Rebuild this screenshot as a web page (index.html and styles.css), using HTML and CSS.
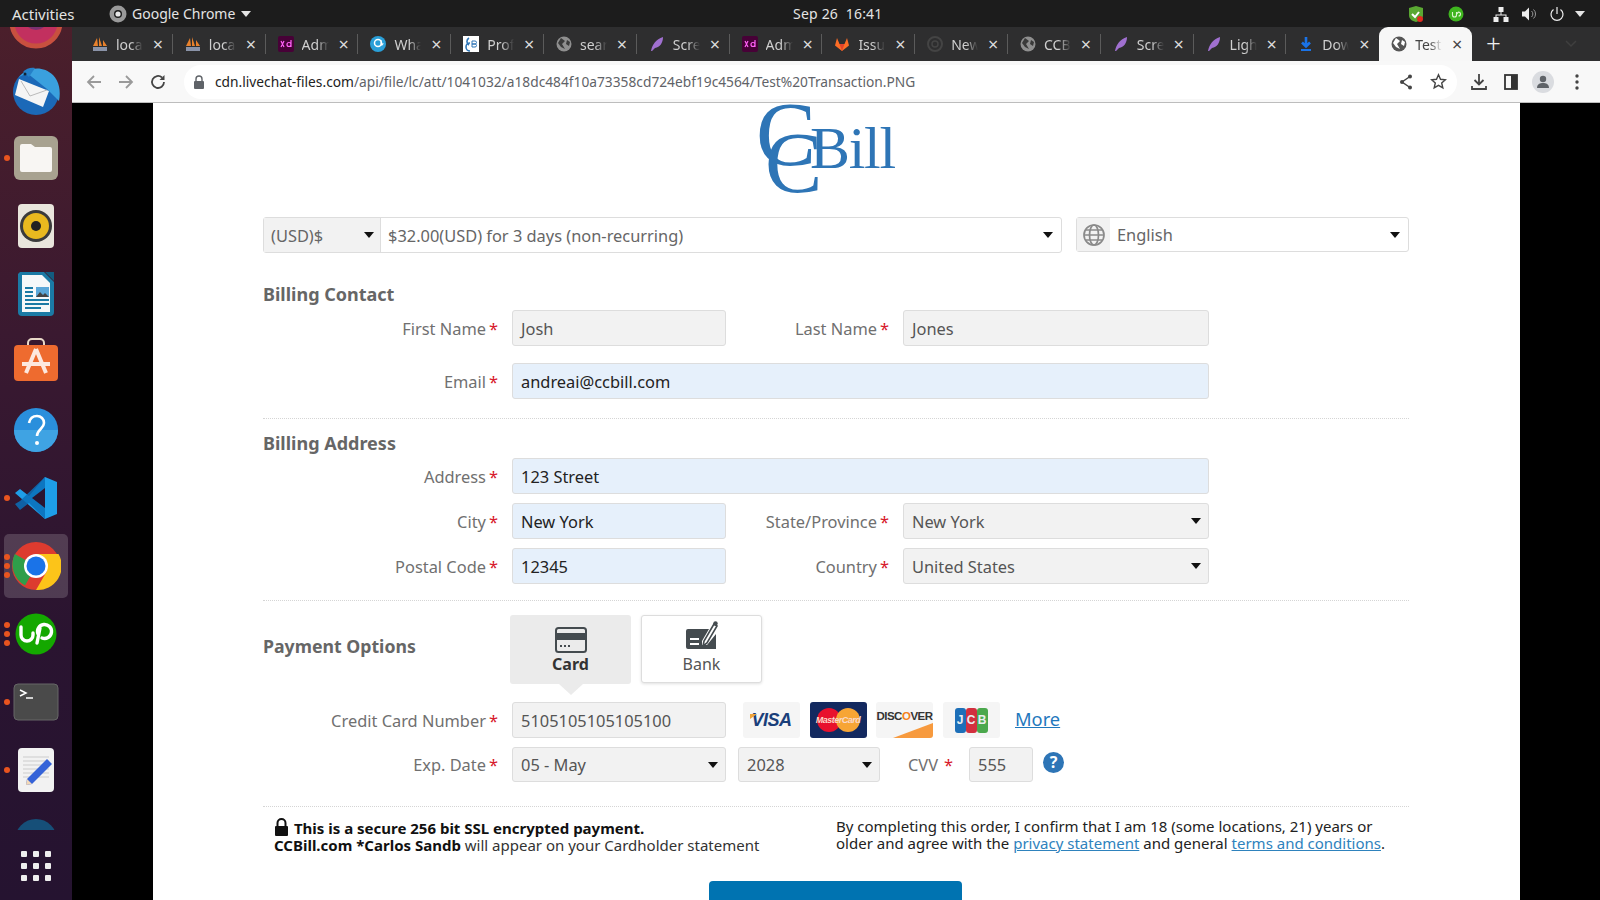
FILE: index.html
```html
<!DOCTYPE html>
<html lang="en">
<head>
<meta charset="utf-8">
<title>Test Transaction</title>
<link rel="stylesheet" href="styles.css">
</head>
<body>
<header class="topbar">
  <span class="activities">Activities</span>
  <span class="appmenu">
    <svg class="ico16" viewBox="0 0 18 18"><circle cx="9" cy="9" r="8.5" fill="#9a9a9a"/><circle cx="9" cy="9" r="4" fill="#1c1c1c"/><circle cx="9" cy="9" r="2.6" fill="#e8e8e8"/></svg>
    Google Chrome <i class="caret-w"></i>
  </span>
  <span class="clock">Sep 26&nbsp; 16:41</span>
  <span class="tray">
    <svg class="tray-a" width="18" height="18" viewBox="0 0 18 18"><path d="M2 3 9 1l7 2v7c0 4-3 6-7 7-4-1-7-3-7-7z" fill="#5aa832"/><path d="m5 9 3 3 4-5" stroke="#fff" stroke-width="2" fill="none"/><circle cx="13" cy="14" r="3" fill="#e02b20"/></svg>
    <svg class="tray-b" width="16" height="16" viewBox="0 0 16 16"><circle cx="8" cy="8" r="7.5" fill="#3fb51f"/><path d="M4.5 6v3a2 2 0 0 0 4 0V6M8.5 8l2-2a1.7 1.7 0 1 1 0 4" stroke="#dff5d0" stroke-width="1.1" fill="none"/></svg>
    <svg class="tray-c" width="16" height="16" viewBox="0 0 16 16" fill="#eee"><rect x="5.5" y="1" width="5" height="5"/><rect x="0.5" y="11" width="5" height="5"/><rect x="10.5" y="11" width="5" height="5"/><path d="M7.5 6h1v2.5H13.5V11h-1V9.5h-9V11h-1V8.5h5z"/></svg>
    <svg class="tray-d" width="16" height="16" viewBox="0 0 16 16"><path d="M1 5.500h3l4-4v13l-4-4H1z" fill="#eee"/><path d="M10.500 5a4 4 0 0 1 0 6M12.500 3.500a6 6 0 0 1 0 9" stroke="#999" fill="none"/></svg>
    <svg class="tray-e" width="16" height="16" viewBox="0 0 16 16" fill="none" stroke="#eee" stroke-width="1.200"><path d="M8 1v7"/><path d="M4.500 3.500a6 6 0 1 0 7 0"/></svg>
    <i class="caret-w"></i>
  </span>
</header>

<div class="desktop">
  <aside class="dock">
    <div class="dock-apps">
      <div class="slot first"><svg width="64" height="64" viewBox="0 0 64 64"><circle cx="32" cy="32" r="24" fill="#c2305f"/><circle cx="32" cy="32" r="24" fill="none" stroke="#c8503f" stroke-width="5"/><circle cx="32" cy="28" r="12" fill="#7a3170"/></svg></div>
      <div class="slot"><svg width="50" height="50" viewBox="0 0 50 50"><circle cx="25" cy="27" r="23" fill="#1b69b8"/><path d="M8 12C16 2 32 0 42 10c6 6 8 16 6 26L36 24 16 8z" fill="#3aa0de"/><path d="M8 14 38 26 32 42 4 30z" fill="#f5f5f5"/><path d="m10 16 9 15 17-6" stroke="#bbb" fill="none"/><path d="M12 7c3-4 9-5 12-4L18 12z" fill="#2580c8"/><circle cx="14" cy="9" r="1.500" fill="#123"/></svg></div>
      <div class="slot"><i class="run one"></i><svg width="46" height="46" viewBox="0 0 46 46"><rect x="1" y="1" width="44" height="44" rx="6" fill="#a8a290"/><path d="M7 11a2 2 0 0 1 2-2h9l4 3h15a2 2 0 0 1 2 2v21a2 2 0 0 1-2 2H9a2 2 0 0 1-2-2z" fill="#f8f6f3"/></svg></div>
      <div class="slot"><svg width="38" height="46" viewBox="0 0 38 46"><rect x="1" y="1" width="36" height="44" rx="4" fill="#e9e5dc"/><circle cx="19" cy="23" r="16" fill="#3b3b3b"/><circle cx="19" cy="23" r="13" fill="#e9b91f"/><circle cx="19" cy="23" r="5" fill="#222"/></svg></div>
      <div class="slot"><svg width="38" height="46" viewBox="0 0 38 46"><path d="M3 1h24l10 10v30a4 4 0 0 1-4 4H5a4 4 0 0 1-4-4V3z" fill="#1b7aa5"/><path d="M5 4h20l8 8v29H5z" fill="#f6f8f9"/><path d="M28 1l9 0 0 9z" fill="#135c80"/><path d="M8 17h8M8 21h8M8 25h8M8 29h24M8 33h24M8 37h16" stroke="#1b7aa5" stroke-width="2"/><rect x="19" y="16" width="13" height="10" fill="#5ba7d8"/><path d="m19 26 4-5 3 3 2-2 4 4z" fill="#444"/></svg></div>
      <div class="slot"><svg class="shift-up" width="46" height="46" viewBox="0 0 46 46"><path d="M15 9V6a4 4 0 0 1 4-4h8a4 4 0 0 1 4 4v3" stroke="#e8d9c8" stroke-width="2" fill="none"/><rect x="1" y="8" width="44" height="36" rx="4" fill="#ee6b2f"/><path d="M23 12 13 36M23 12l10 24M9 27h28" stroke="#fde8de" stroke-width="4" fill="none"/></svg></div>
      <div class="slot"><svg width="46" height="46" viewBox="0 0 46 46"><circle cx="23" cy="23" r="22" fill="#2a8fdc"/><path d="M23 23h22a22 22 0 0 1-44 0z" fill="#3fa3e3"/><path d="M16 16c1-5 4-7 8-7s7 3 7 7c0 6-7 6-7 13" stroke="#fff" stroke-width="2.600" fill="none"/><circle cx="24" cy="36" r="2" fill="#fff"/></svg></div>
      <div class="slot"><i class="run one"></i><svg width="44" height="44" viewBox="0 0 44 44"><path d="M31 1 43 6v32l-12 5L1 17l5-4 9 7z" fill="#1e9ee8"/><path d="M31 1v42L15 27 6 34 1 28l5-3z" fill="#0a6fb8" opacity=".85"/><path d="M31 12 18 22l13 10z" fill="#2b1430"/></svg></div>
      <div class="slot active"><i class="run three"></i><svg width="50" height="50" viewBox="0 0 50 50"><circle cx="25" cy="25" r="24" fill="#dd3b2f"/><path d="M25 25 14 44.500A24 24 0 0 1 3.800 13z" fill="#2f9e4a"/><path d="M25 13H47.500A24 24 0 0 1 25 49L36 30z" fill="#fcc419"/><circle cx="25" cy="25" r="12" fill="#fff"/><circle cx="25" cy="25" r="9.500" fill="#1a73e8"/></svg></div>
      <div class="slot"><i class="run three"></i><svg width="42" height="42" viewBox="0 0 42 42"><circle cx="21" cy="21" r="20.500" fill="#14a800"/><path d="M6 14v8a6 6 0 0 0 12 0v-2" stroke="#fff" stroke-width="3.400" fill="none" stroke-linecap="round"/><path d="M18 22a7 7 0 1 1 4 4M20 16l-3 15" stroke="#fff" stroke-width="3.400" fill="none" stroke-linecap="round" transform="translate(5 -1)"/></svg></div>
      <div class="slot"><i class="run one"></i><svg width="46" height="38" viewBox="0 0 46 38"><rect x="1" y="1" width="44" height="36" rx="4" fill="#4a4a4a" stroke="#666"/><path d="m7 7 6 3-6 3" stroke="#fff" stroke-width="1.500" fill="none"/><path d="M13 15h7" stroke="#fff" stroke-width="1.500"/></svg></div>
      <div class="slot"><i class="run one"></i><svg width="38" height="46" viewBox="0 0 38 46"><rect x="1" y="1" width="36" height="44" rx="4" fill="#f2f2f2"/><path d="M6 10h26M6 14h26M6 18h26M6 22h26M6 26h26M6 30h26" stroke="#ccc"/><path d="m30 12 5 5-20 20-6 1 1-6z" fill="#3563d8"/><path d="m10 32 5 5-6 1z" fill="#f3d9b8"/></svg></div>
      <div class="slot"><svg width="42" height="46" viewBox="0 0 42 46"><circle cx="21" cy="25" r="21" fill="#164f78"/><circle cx="21" cy="27" r="9" fill="#4a3a44"/></svg></div>
    </div>
    <div class="dock-grid"><i></i><i></i><i></i><i></i><i></i><i></i><i></i><i></i><i></i></div>
  </aside>

  <main class="browser">
    <nav class="tabstrip">
      <div class="tab"><svg class="fav" viewBox="0 0 16 16"><path d="M1 10 5 2l1 8zM7 10V1l3 9zM11 10V4l4 6z" fill="#e8812c"/><rect x="1" y="11" width="14" height="4" fill="#8a93a8"/></svg><span class="tt">localhost</span><span class="tx">×</span></div>
      <div class="tab"><svg class="fav" viewBox="0 0 16 16"><path d="M1 10 5 2l1 8zM7 10V1l3 9zM11 10V4l4 6z" fill="#e8812c"/><rect x="1" y="11" width="14" height="4" fill="#8a93a8"/></svg><span class="tt">localhost</span><span class="tx">×</span></div>
      <div class="tab"><svg class="fav" viewBox="0 0 16 16"><rect width="16" height="16" rx="2" fill="#470137"/><path d="M3 5l3 6M6 5l-3 6M13 4v7M13 8.500a2 2 0 1 0-4 0 2 2 0 0 0 4 0" stroke="#ff61f6" stroke-width="1.200" fill="none"/></svg><span class="tt">Admin</span><span class="tx">×</span></div>
      <div class="tab"><svg class="fav" viewBox="0 0 16 16"><circle cx="8" cy="8" r="8" fill="#2a9fd8"/><circle cx="8" cy="7" r="3.500" fill="none" stroke="#fff" stroke-width="1.500"/><path d="M11 4v5q2 1 2-2" stroke="#fff" fill="none"/></svg><span class="tt">What</span><span class="tx">×</span></div>
      <div class="tab"><svg class="fav" viewBox="0 0 16 16"><rect width="16" height="16" fill="#fff"/><path d="M6 2a4 4 0 0 0 0 7M7 7a4 4 0 0 0 0 8" stroke="#2e75b6" stroke-width="1.600" fill="none"/><path d="M9 5h3a1.500 1.500 0 0 1 0 3H9zM9 8h3a1.500 1.500 0 0 1 0 3H9z" stroke="#2e75b6" fill="none"/></svg><span class="tt">Profile</span><span class="tx">×</span></div>
      <div class="tab"><svg class="fav" viewBox="0 0 16 16"><circle cx="8" cy="8" r="7.500" fill="#8f8f8f"/><path d="M5 2 9 5 6 8l3 5-4-2-3-4zM11 4l3 2-1 4-3-2z" fill="#3a3a3a"/></svg><span class="tt">search</span><span class="tx">×</span></div>
      <div class="tab"><svg class="fav" viewBox="0 0 16 16"><path d="M2 15C3 9 7 3 14 1c0 6-3 10-8 11L3 15z" fill="#a070d0"/></svg><span class="tt">Screen</span><span class="tx">×</span></div>
      <div class="tab"><svg class="fav" viewBox="0 0 16 16"><rect width="16" height="16" rx="2" fill="#470137"/><path d="M3 5l3 6M6 5l-3 6M13 4v7M13 8.500a2 2 0 1 0-4 0 2 2 0 0 0 4 0" stroke="#ff61f6" stroke-width="1.200" fill="none"/></svg><span class="tt">Admin</span><span class="tx">×</span></div>
      <div class="tab"><svg class="fav" viewBox="0 0 16 16"><path d="M8 15 1 9.500 3 2l2.500 6h5L13 2l2 7.500z" fill="#fc6d26"/><path d="M8 15 5.500 8h5z" fill="#e24329"/></svg><span class="tt">Issues</span><span class="tx">×</span></div>
      <div class="tab"><svg class="fav" viewBox="0 0 16 16"><circle cx="8" cy="8" r="7" fill="none" stroke="#444" stroke-width="2"/><circle cx="8" cy="8" r="3" fill="none" stroke="#444" stroke-width="1.500"/></svg><span class="tt">New Tab</span><span class="tx">×</span></div>
      <div class="tab"><svg class="fav" viewBox="0 0 16 16"><circle cx="8" cy="8" r="7.500" fill="#8f8f8f"/><path d="M5 2 9 5 6 8l3 5-4-2-3-4zM11 4l3 2-1 4-3-2z" fill="#3a3a3a"/></svg><span class="tt">CCBill</span><span class="tx">×</span></div>
      <div class="tab"><svg class="fav" viewBox="0 0 16 16"><path d="M2 15C3 9 7 3 14 1c0 6-3 10-8 11L3 15z" fill="#a070d0"/></svg><span class="tt">Screen</span><span class="tx">×</span></div>
      <div class="tab"><svg class="fav" viewBox="0 0 16 16"><path d="M2 15C3 9 7 3 14 1c0 6-3 10-8 11L3 15z" fill="#a070d0"/></svg><span class="tt">Light</span><span class="tx">×</span></div>
      <div class="tab pre"><svg class="fav" viewBox="0 0 16 16"><path d="M8 1v9M4 6.500 8 10.500l4-4" stroke="#1a73e8" stroke-width="2.600" fill="none"/><path d="M3 14h10" stroke="#1a73e8" stroke-width="2"/></svg><span class="tt">Downloads</span><span class="tx">×</span></div>
      <div class="tab current"><svg class="fav" viewBox="0 0 16 16"><circle cx="8" cy="8" r="7.500" fill="#555"/><path d="M5 2 9 5 6 8l3 5-4-2-3-4zM11 4l3 2-1 4-3-2z" fill="#fff"/></svg><span class="tt">Test Transaction</span><span class="tx">×</span></div>
      <span class="newtab">+</span>
      <svg class="tabchev" width="12" height="8" viewBox="0 0 12 8"><path d="m1 1 5 5 5-5" stroke="#3f3f3f" stroke-width="1.500" fill="none"/></svg>
    </nav>

    <div class="toolbar">
      <svg class="tb" viewBox="0 0 18 18"><path d="M16 9H3M9 3 3 9l6 6" stroke="#9a9a9a" stroke-width="1.800" fill="none"/></svg>
      <svg class="tb" viewBox="0 0 18 18"><path d="M2 9h13M9 3l6 6-6 6" stroke="#9a9a9a" stroke-width="1.800" fill="none"/></svg>
      <svg class="tb" viewBox="0 0 18 18"><path d="M15 9a6 6 0 1 1-2-4.500" stroke="#444" stroke-width="1.800" fill="none"/><path d="M15.500 2v5h-5z" fill="#444"/></svg>
      <div class="omnibox">
        <svg class="lock" width="12" height="14" viewBox="0 0 12 14"><path d="M3 6V4a3 3 0 0 1 6 0v2" stroke="#5f6368" stroke-width="1.400" fill="none"/><rect x="1" y="6" width="10" height="8" rx="1" fill="#5f6368"/></svg>
        <span class="url"><b>cdn.livechat-files.com</b>/api/file/lc/att/1041032/a18dc484f10a73358cd724ebf19c4564/Test%20Transaction.PNG</span>
        <svg class="omni-a" width="16" height="16" viewBox="0 0 16 16"><path d="M12 2.500 4 8l8 5.500" stroke="#444" stroke-width="1.500" fill="none"/><circle cx="12" cy="2.500" r="2" fill="#444"/><circle cx="4" cy="8" r="2" fill="#444"/><circle cx="12" cy="13.500" r="2" fill="#444"/></svg>
        <svg class="omni-b" width="17" height="17" viewBox="0 0 17 17"><path d="m8.500 1.800 2 4.500 4.900.5-3.700 3.200 1.100 4.800-4.300-2.500-4.300 2.500 1.100-4.800L1.600 6.800l4.900-.5z" stroke="#444" stroke-width="1.400" fill="none"/></svg>
      </div>
      <svg class="tb2 first-tb" viewBox="0 0 18 18"><path d="M9 1v10M4.500 7 9 11.500 13.500 7" stroke="#444" stroke-width="1.800" fill="none"/><path d="M2 13v3h14v-3" stroke="#444" stroke-width="1.800" fill="none"/></svg>
      <svg class="tb2" viewBox="0 0 18 18"><rect x="3" y="2" width="12" height="14" fill="none" stroke="#333" stroke-width="1.800"/><rect x="9" y="2" width="6" height="14" fill="#333"/></svg>
      <svg class="tb2" viewBox="0 0 22 22"><circle cx="11" cy="11" r="11" fill="#dadce0"/><circle cx="11" cy="8" r="3.200" fill="#5f6368"/><path d="M5 17c0-4 3-5 6-5s6 1 6 5z" fill="#5f6368"/></svg>
      <svg class="tb2" viewBox="0 0 18 18" fill="#444"><circle cx="9" cy="3" r="1.700"/><circle cx="9" cy="9" r="1.700"/><circle cx="9" cy="15" r="1.700"/></svg>
    </div>

    <section class="viewer">
      <article class="sheet">
        <div class="logo"><span class="logo-c1">C</span><span class="logo-c2">C</span><span class="logo-bill">Bill</span></div>

        <div class="pricebar">
          <div class="pricegroup">
            <div class="pg-cur">(USD)$<i class="caret"></i></div>
            <div class="pg-amt">$32.00(USD) for 3 days (non-recurring)<i class="caret"></i></div>
          </div>
          <div class="langgroup">
            <div class="lang-ico"><svg width="24" height="24" viewBox="0 0 24 24" fill="none" stroke="#8a8a8a" stroke-width="1.700"><circle cx="12" cy="12" r="10"/><ellipse cx="12" cy="12" rx="4.500" ry="10"/><path d="M2 12h20M3.300 7h17.400M3.300 17h17.400"/></svg></div>
            <div class="lang-val">English<i class="caret"></i></div>
          </div>
        </div>

        <h2 class="sect sect-contact">Billing Contact</h2>
        <div class="grid-row gap-17">
          <label class="lbl">First Name <em>*</em></label>
          <div class="fld">Josh</div>
          <label class="lbl">Last Name <em>*</em></label>
          <div class="fld">Jones</div>
        </div>
        <div class="grid-row">
          <label class="lbl">Email <em>*</em></label>
          <div class="fld blue span3">andreai@ccbill.com</div>
        </div>
        <hr class="rule rule-a">

        <h2 class="sect">Billing Address</h2>
        <div class="grid-row gap-9">
          <label class="lbl">Address <em>*</em></label>
          <div class="fld blue span3">123 Street</div>
        </div>
        <div class="grid-row gap-city">
          <label class="lbl">City <em>*</em></label>
          <div class="fld blue">New York</div>
          <label class="lbl">State/Province <em>*</em></label>
          <div class="fld">New York<i class="caret"></i></div>
        </div>
        <div class="grid-row">
          <label class="lbl">Postal Code <em>*</em></label>
          <div class="fld blue">12345</div>
          <label class="lbl">Country <em>*</em></label>
          <div class="fld">United States<i class="caret"></i></div>
        </div>
        <hr class="rule rule-b">

        <div class="payopts">
          <h2 class="sect payhead">Payment Options</h2>
          <div class="ptab on">
            <svg width="32" height="26" viewBox="0 0 32 26"><rect x="1" y="1" width="30" height="24" rx="2.500" fill="none" stroke="#444b4f" stroke-width="2"/><rect x="1" y="6" width="30" height="7" fill="#444b4f"/><path d="M5 19h2M9 19h2M13 19h2" stroke="#444b4f" stroke-width="2"/></svg>
            <span>Card</span>
          </div>
          <div class="ptab">
            <svg width="34" height="32" viewBox="0 0 34 32"><path d="M3 8h21l-7 12v4h5l9-11v15H3a2 2 0 0 1-2-2V10a2 2 0 0 1 2-2z" fill="#444b4f"/><path d="M5 18h9M5 23h9" stroke="#fff" stroke-width="2"/><path d="M29 3 19 20l-1 5 4-3L32 5z" fill="none" stroke="#444b4f" stroke-width="1.600"/><circle cx="30.500" cy="2.500" r="2.200" fill="#444b4f"/></svg>
            <span>Bank</span>
          </div>
        </div>

        <div class="cc-row">
          <label class="lbl">Credit Card Number <em>*</em></label>
          <div class="fld">5105105105105100</div>
          <div class="brands">
            <div class="brand visa">VISA</div>
            <div class="brand mc"><i class="mc-r"></i><i class="mc-o"></i><span>MasterCard</span></div>
            <div class="brand disc"><span>DISC<b>O</b>VER</span></div>
            <div class="brand jcb"><span class="j">J</span><span class="c">C</span><span class="b">B</span></div>
            <a class="more">More</a>
          </div>
        </div>

        <div class="exp-row">
          <label class="lbl">Exp. Date <em>*</em></label>
          <div class="fld month">05 - May<i class="caret"></i></div>
          <div class="fld year">2028<i class="caret"></i></div>
          <label class="cvv-lbl">CVV <em>*</em></label>
          <div class="fld cvv">555</div>
          <span class="help">?</span>
        </div>
        <hr class="rule rule-c">

        <div class="legal">
          <p class="secure">
            <svg width="15" height="18" viewBox="0 0 15 18"><path d="M3.500 8V5a4 4 0 0 1 8 0v3" stroke="#111" stroke-width="2" fill="none"/><rect x="1" y="8" width="13" height="10" rx="1" fill="#111"/></svg>
            <b>This is a secure 256 bit SSL encrypted payment.</b><br>
            <b>CCBill.com *Carlos Sandb</b> will appear on your Cardholder statement
          </p>
          <p class="terms">By completing this order, I confirm that I am 18 (some locations, 21) years or older and agree with the <a>privacy statement</a> and general <a>terms and conditions</a>.</p>
        </div>
        <div class="submit-wrap"><div class="submit"></div></div>
      </article>
    </section>
  </main>
</div>
</body>
</html>
```

FILE: styles.css
```css
* { box-sizing: border-box; }
html, body { margin: 0; height: 900px; overflow: hidden; }
body { width: 1600px; display: flex; flex-direction: column; font-family: "Noto Sans", "Liberation Sans", sans-serif; background: #000; }

/* top bar */
.topbar { height: 27px; flex: none; background: #1c1c1c; color: #e4e4e4; font-size: 14px; display: flex; align-items: center; padding-left: 12px; position: relative; }
.activities { width: 97px; font-size: 15px; }
.appmenu { display: flex; align-items: center; gap: 5px; }
.ico16 { width: 18px; height: 18px; }
.caret-w { width: 0; height: 0; border: 5px solid transparent; border-top: 6px solid #e4e4e4; border-bottom: 0; display: inline-block; margin-left: 1px; }
.tray .caret-w { margin-left: 6px; }
.clock { position: absolute; left: 793px; letter-spacing: .2px; }
.tray { margin-left: auto; display: flex; align-items: center; padding-right: 15px; }
.tray-a { margin-right: 23px; }
.tray-b { margin-right: 29px; }
.tray-c { margin-right: 12px; }
.tray-d { margin-right: 12px; }
.tray-e { margin-right: 4px; }

.desktop { flex: 1; display: flex; min-height: 0; }

/* dock */
.dock { width: 72px; flex: none; display: flex; flex-direction: column; overflow: hidden; background: linear-gradient(180deg, #4b1f2b 0%, #3a1930 35%, #2a1430 70%, #251330 100%); }
.dock-apps { flex: 1; min-height: 0; overflow: hidden; display: flex; flex-direction: column; }
.slot { flex: none; height: 68px; width: 72px; display: flex; align-items: center; justify-content: center; position: relative; }
.slot.first { margin-top: -39px; }
.slot.active::before { content: ""; position: absolute; left: 4px; right: 4px; top: 2px; bottom: 2px; border-radius: 5px; background: rgba(255,255,255,.17); }
.slot svg { position: relative; }
.slot svg.shift-up { margin-top: -4px; }
.run { position: absolute; left: 4px; width: 6px; height: 6px; border-radius: 50%; background: #e9541f; top: 31px; z-index: 1; }
.run.three { box-shadow: 0 -9px 0 #e9541f, 0 9px 0 #e9541f; }
.dock-grid { flex: none; height: 70px; display: grid; grid-template-columns: repeat(3, 6px); grid-auto-rows: 6px; gap: 6px; justify-content: center; padding-top: 21px; }
.dock-grid i { background: #eee; border-radius: 1px; }

.browser { flex: 1; min-width: 0; display: flex; flex-direction: column; }

/* tabs */
.tabstrip { height: 34px; flex: none; background: #2e2e2f; display: flex; padding-left: 8px; align-items: stretch; position: relative; }
.tab { width: 92.8px; flex: none; display: flex; align-items: center; padding-left: 12px; position: relative; color: #cfcfcf; font-size: 14px; }
.tab::after { content: ""; position: absolute; right: 0; top: 7px; bottom: 7px; width: 1px; background: #5b5b5b; }
.tab.pre::after, .tab.current::after { display: none; }
.fav { width: 16px; height: 16px; flex: none; margin-right: 8px; }
.tt { width: 27px; flex: none; overflow: hidden; white-space: nowrap; -webkit-mask-image: linear-gradient(90deg, #000 55%, transparent 100%); mask-image: linear-gradient(90deg, #000 55%, transparent 100%); }
.tx { margin-left: 7px; font-size: 18px; line-height: 1; width: 16px; text-align: center; color: #dcdcdc; }
.tab.current { background: #f7f7f7; color: #444; border-radius: 9px 9px 0 0; }
.tab.current .tx { color: #444; }
.newtab { color: #eee; font-size: 26px; line-height: 32px; margin-left: 14px; font-weight: 300; }
.tabchev { position: absolute; left: 1493px; top: 13px; }

/* toolbar */
.toolbar { height: 42px; flex: none; background: #f8f8f8; border-bottom: 1px solid #bdbdbd; display: flex; align-items: center; padding-left: 13px; }
.tb { width: 18px; height: 18px; margin-right: 14px; flex: none; }
.omnibox { width: 1282px; margin-left: 3px; height: 34px; border-radius: 17px; background: #fff; display: flex; align-items: center; padding-left: 9px; }
.url { font-size: 13.750px; color: #5f6368; margin-left: 10px; white-space: nowrap; flex: 1; }
.url b { font-weight: 400; color: #222; }
.omni-a { margin-right: 16px; }
.omni-b { margin-right: 10px; }
.tb2 { width: 18px; height: 18px; flex: none; margin-right: 14px; }
.tb2.first-tb { margin-left: 13px; }
.tb2:nth-last-child(2) { width: 22px; height: 22px; margin-left: -2px; margin-right: 14px; }

/* viewer */
.viewer { flex: 1; min-height: 0; background: #000; padding-left: 81px; overflow: hidden; }
.sheet { width: 1367px; height: 797px; background: #fff; padding: 0 111px 0 110px; overflow: hidden; color: #666; font-size: 16.400px; }

.logo { height: 114px; position: relative; font-family: "Liberation Serif", serif; color: #2e75b6; }
.logo span { position: absolute; line-height: 1; }
.logo-c1 { left: 493px; top: -13px; font-size: 90px; }
.logo-c2 { left: 502px; top: 17px; font-size: 86px; }
.logo-bill { left: 547px; top: 15px; font-size: 60px; letter-spacing: -1.300px; }

.caret { width: 0; height: 0; border: 5.500px solid transparent; border-top: 6px solid #111; border-bottom: 0; margin-left: auto; flex: none; }

.pricebar { display: flex; gap: 14px; align-items: flex-start; }
.pricegroup { width: 799px; height: 36px; display: flex; border: 1px solid #ddd; border-radius: 3px; }
.pg-cur { width: 117px; background: #f2f2f2; display: flex; align-items: center; padding: 0 6px 0 7px; border-right: 1px solid #ddd; }
.pg-amt { flex: 1; display: flex; align-items: center; padding: 0 8px 0 7px; }
.langgroup { width: 333px; height: 35px; display: flex; border: 1px solid #ddd; border-radius: 3px; }
.lang-ico { width: 33px; background: #f2f2f2; display: flex; align-items: center; justify-content: center; }
.lang-val { flex: 1; display: flex; align-items: center; padding: 0 8px 0 7px; }

.sect { margin: 0; font-size: 18px; font-weight: 700; color: #666; height: 28px; line-height: 28px; }
.sect-contact { margin-top: 27px; margin-bottom: 2px; }
.rule + .sect { margin-top: 10px; margin-bottom: 1px; }

.grid-row { display: grid; grid-template-columns: 249px 214px 177px 306px; height: 36px; margin-bottom: 17px; }
.grid-row.gap-9 { margin-bottom: 9px; }
.grid-row.gap-city { margin-bottom: 9px; }
.grid-row:has(+ .rule) { margin-bottom: 0; }
.span3 { grid-column: span 3; }

.lbl { display: flex; align-items: center; justify-content: flex-end; gap: 3px; padding-right: 14px; white-space: nowrap; color: #707070; }
.lbl em, .cvv-lbl em { color: #d7182a; font-style: normal; }

.fld { height: 36px; background: #f2f2f2; border: 1px solid #ddd; border-radius: 3px; display: flex; align-items: center; padding: 0 7px 0 8px; color: #555; white-space: nowrap; }
.fld.blue { background: #e6f0fb; color: #222; }

.rule { border: 0; border-top: 1px dotted #d5d5d5; margin: 0; }
.rule-a { margin-top: 19px; }
.rule-b { margin-top: 16px; }
.rule-c { margin-top: 24px; }

.payopts { margin-top: 14px; height: 87px; display: flex; gap: 10px; align-items: flex-start; }
.payhead { width: 237px; margin-top: 17px; font-size: 17.700px; }
.ptab { width: 121px; height: 68px; border: 1px solid #ddd; border-radius: 3px; background: #fff; display: flex; flex-direction: column; align-items: center; justify-content: flex-end; padding-bottom: 7px; color: #555; font-size: 16px; box-shadow: 0 1px 3px rgba(0,0,0,.12); }
.ptab.on { height: 69px; border: 0; background: #ebebeb; box-shadow: none; color: #333; font-weight: 700; position: relative; padding-bottom: 9px; }
.ptab.on::after { content: ""; position: absolute; left: 50%; top: 100%; margin-left: -12px; border: 12px solid transparent; border-top: 11px solid #ebebeb; border-bottom: 0; }

.cc-row { display: grid; grid-template-columns: 249px 214px auto; height: 36px; }
.brands { display: flex; align-items: center; margin-left: 17px; gap: 9.500px; }
.brand { width: 57px; height: 36px; background: #f5f5f5; border-radius: 3px; position: relative; overflow: hidden; display: flex; align-items: center; justify-content: center; }
.visa { font-family: "Liberation Sans", sans-serif; font-style: italic; font-weight: 700; font-size: 18px; color: #1a3f7a; letter-spacing: -.5px; }
.visa::before { content: ""; position: absolute; left: 7px; top: 12px; border-left: 7px solid #f0a43a; border-bottom: 5px solid transparent; }
.mc { background: #13295f; }
.mc-r, .mc-o { position: absolute; width: 24px; height: 24px; border-radius: 50%; top: 6px; }
.mc-r { left: 7px; background: #e8112d; }
.mc-o { left: 26px; background: #f7a535; }
.mc span { position: relative; font-family: "Liberation Sans", sans-serif; font-size: 9px; font-style: italic; font-weight: 700; color: #fbd9c8; white-space: nowrap; letter-spacing: -.5px; }
.disc { font-family: "Liberation Sans", sans-serif; font-weight: 700; font-size: 11.500px; color: #333; align-items: flex-start; padding-top: 8px; letter-spacing: -.5px; }
.disc b { color: #f58220; }
.disc::after { content: ""; position: absolute; right: 0; bottom: 0; border-left: 40px solid transparent; border-bottom: 15px solid #f79a3e; }
.jcb { gap: 0; font-family: "Liberation Sans", sans-serif; font-weight: 700; font-size: 12px; color: #e8eef0; }
.jcb span { width: 11px; height: 25px; border-radius: 3px; display: flex; align-items: center; justify-content: center; }
.j { background: #1d6fb8; }
.c { background: #d2303e; }
.b { background: #4ba84d; }
.more { margin-left: 6px; margin-bottom: 4px; color: #1f78bd; font-size: 18.300px; text-decoration: underline; }

.exp-row { margin-top: 9px; height: 35px; display: flex; align-items: flex-start; }
.exp-row .lbl { width: 249px; height: 35px; }
.exp-row .fld { height: 35px; }
.month { width: 214px; }
.year { width: 142px; margin-left: 12px; }
.cvv-lbl { margin-left: 28px; width: 61px; height: 35px; display: flex; align-items: center; gap: 6px; color: #707070; }
.cvv { width: 64px; flex: none; }
.help { width: 21px; height: 21px; border-radius: 50%; background: #2e75b6; color: #fff; margin-left: 10px; margin-top: 5px; font-weight: 700; font-size: 16px; line-height: 21px; text-align: center; }

.legal { display: flex; margin-top: 11px; font-size: 15px; line-height: 17px; color: #333; }
.legal p { margin: 0; }
.legal b { color: #111; }
.secure { width: 573px; padding-left: 11px; }
.secure svg { vertical-align: -2px; margin-right: 1px; }
.terms { width: 560px; color: #222; }
.terms a { color: #2e82bd; text-decoration: underline; }

.submit-wrap { margin-top: 27px; padding-left: 446px; }
.submit { width: 253px; height: 40px; background: #0073b1; border-radius: 4px 4px 0 0; }
```
